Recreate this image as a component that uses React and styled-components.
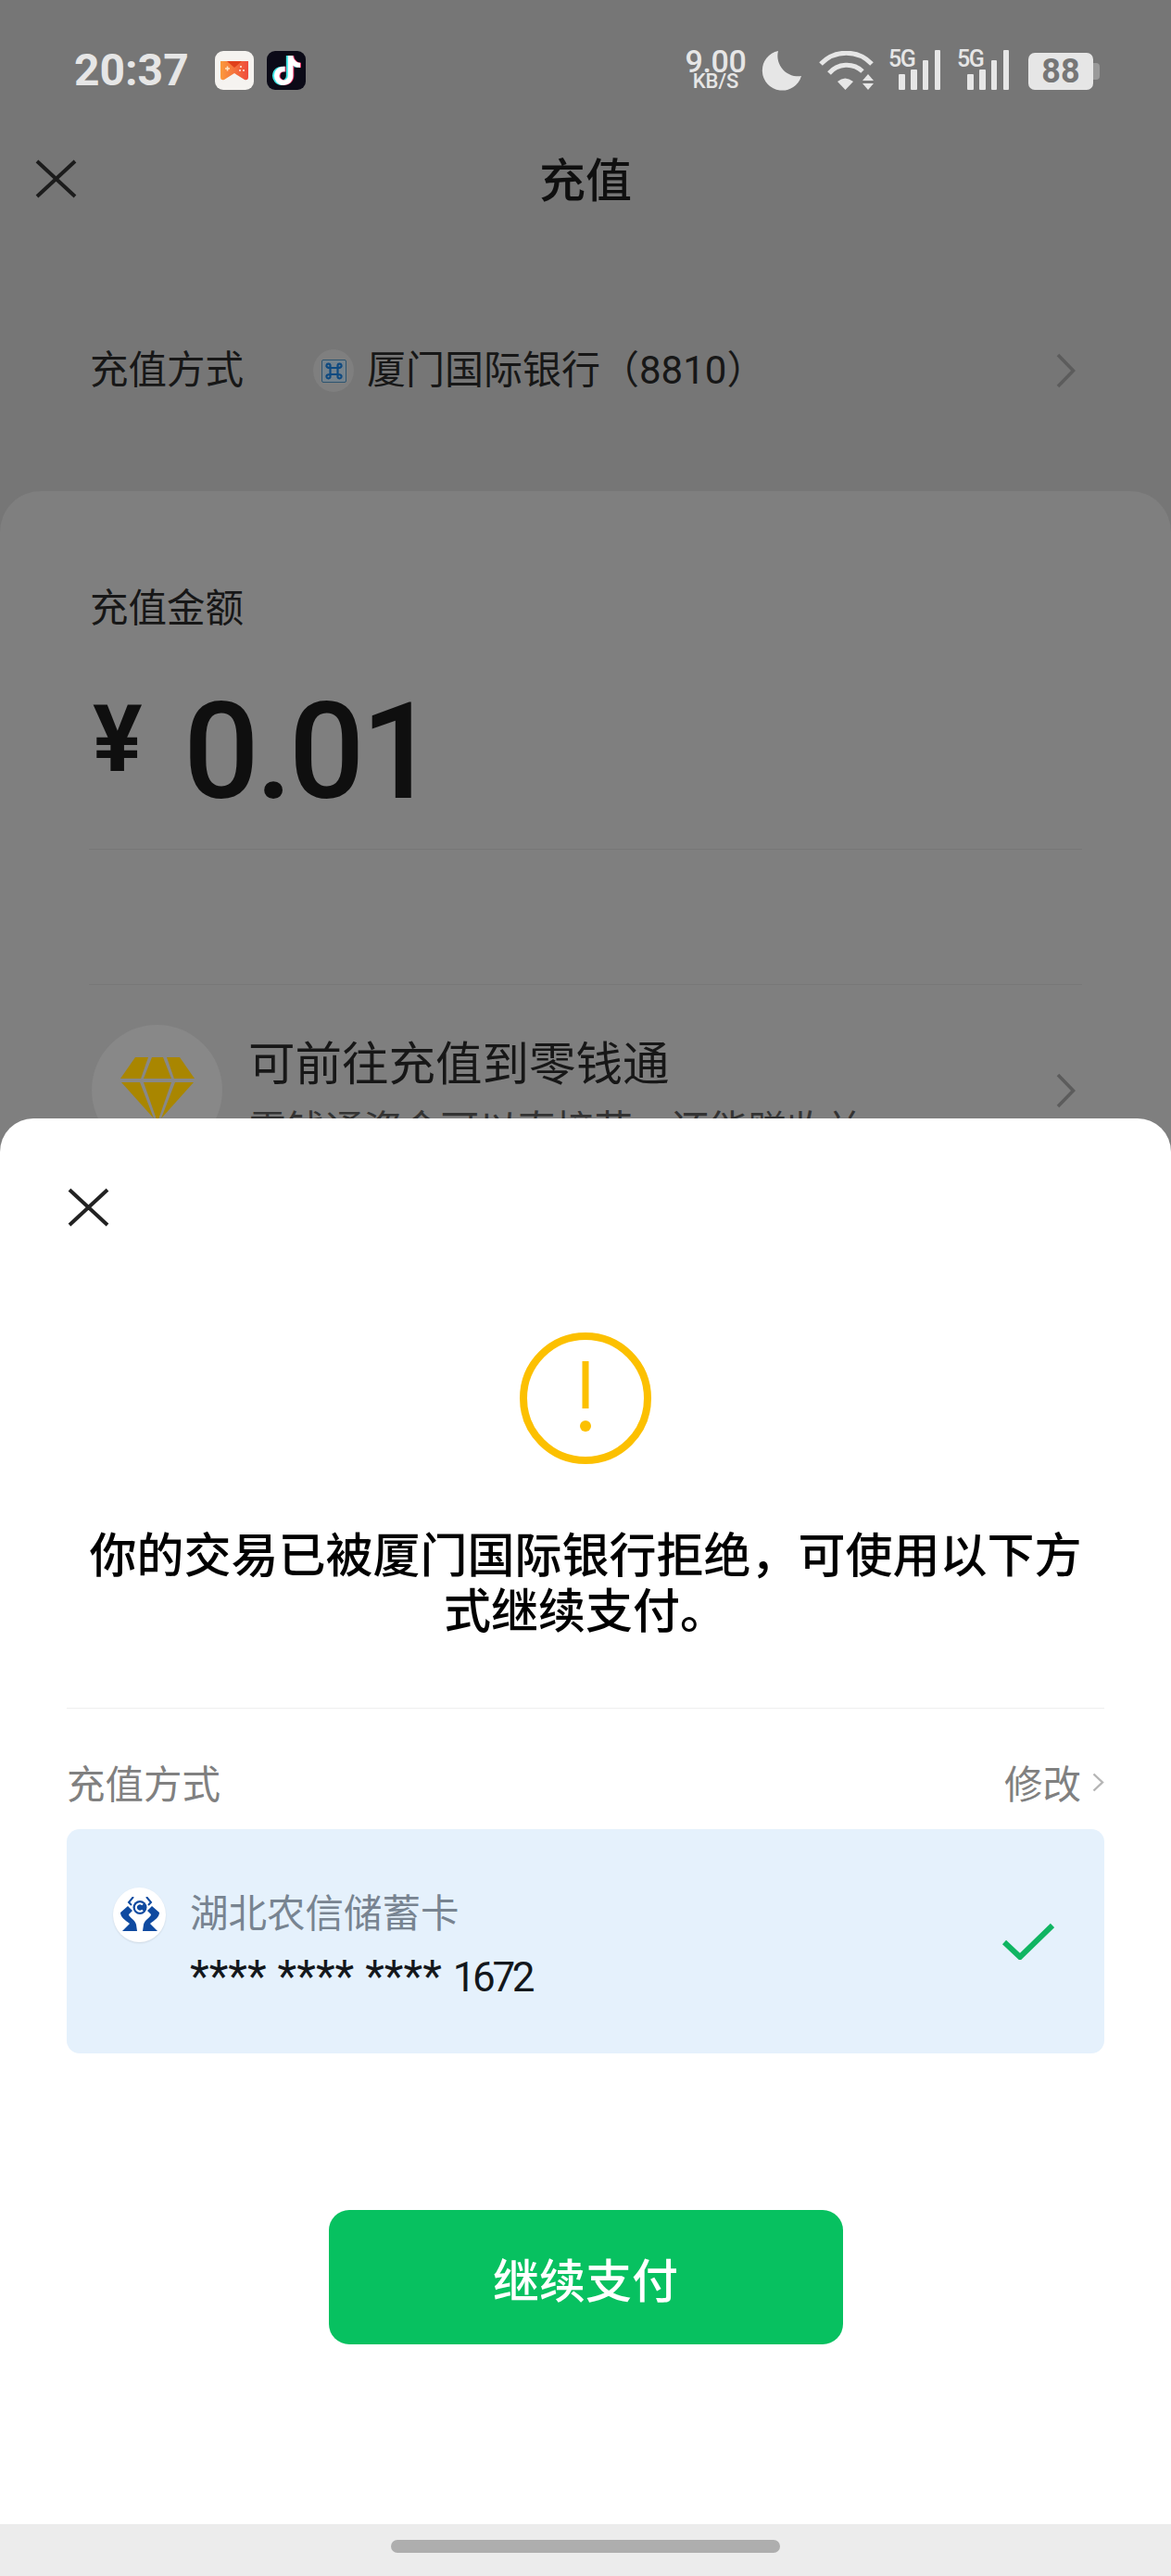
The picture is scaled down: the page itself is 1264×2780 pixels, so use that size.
import React from 'react'
import styled, { createGlobalStyle } from 'styled-components'
import { FaTiktok } from 'react-icons/fa'

const GlobalStyle = createGlobalStyle`
  html, body {
    margin: 0;
    padding: 0;
    background: #767676;
  }
  * {
    box-sizing: border-box;
  }
`

const Page = styled.div`
  position: relative;
  width: 1264px;
  height: 2780px;
  overflow: hidden;
  background: #767676;
  color: #171717;
  font-family: Roboto, "Noto Sans CJK SC", sans-serif;
`

const StatusBar = styled.div`
  height: 98px;
  padding: 54px 77px 0 80px;
  display: flex;
  justify-content: space-between;
  color: #e6e6e6;
`

const StatusLeft = styled.div`
  display: flex;
  align-items: center;
  height: 44px;
`

const Clock = styled.span`
  width: 152px;
  font-size: 48px;
  font-weight: 700;
  line-height: 44px;
`

const AppTile = styled.div`
  position: relative;
  width: 42px;
  height: 42px;
  margin-right: 14px;
  border-radius: 9px;
  background: ${(props) => props.bg};
  overflow: hidden;
`

const NoteLayer = styled(FaTiktok)`
  position: absolute;
  top: 5px;
  left: ${(props) => props.left}px;
  width: 32px;
  height: 32px;
  color: ${(props) => props.tint};
`

const StatusRight = styled.div`
  display: flex;
  align-items: flex-start;
  height: 44px;
`

const Speed = styled.div`
  width: 69px;
  margin-right: 14px;
  display: flex;
  flex-direction: column;
  align-items: center;
`

const SpeedValue = styled.span`
  font-size: 34px;
  font-weight: 500;
  line-height: 25px;
  letter-spacing: -0.4px;
`

const SpeedUnit = styled.span`
  font-size: 22px;
  font-weight: 500;
  line-height: 18px;
`

const Moon = styled.svg`
  width: 44px;
  height: 43px;
  margin: 1px 19px 0 0;
`

const Wifi = styled.svg`
  width: 59px;
  height: 42px;
  margin: 1px 16px 0 0;
`

const Signal = styled.div`
  position: relative;
  width: 56px;
  height: 43px;
  margin-right: ${(props) => props.gap}px;
`

const SignalLabel = styled.span`
  position: absolute;
  top: -3px;
  left: 0;
  font-size: 25px;
  font-weight: 500;
  line-height: 25px;
  letter-spacing: -1.4px;
`

const SignalBars = styled.svg`
  display: block;
  width: 56px;
  height: 43px;
`

const Battery = styled.div`
  display: flex;
  align-items: center;
  margin-top: 3px;
`

const BatteryBody = styled.div`
  width: 70px;
  height: 40px;
  border-radius: 7px;
  background: #e6e6e6;
  color: #767676;
  font-size: 36px;
  font-weight: 700;
  line-height: 40px;
  text-align: center;
`

const BatteryNub = styled.div`
  width: 7px;
  height: 18px;
  border-radius: 0 4px 4px 0;
  background: #9a9a9a;
`

const Header = styled.div`
  position: relative;
  height: 192px;
  padding-top: 4px;
  display: flex;
  align-items: center;
  justify-content: center;
`

const CloseIcon = styled.svg`
  display: block;
  width: 45px;
  height: 42px;
`

const HeaderClose = styled.div`
  position: absolute;
  left: 38px;
  top: 74px;
`

const Title = styled.div`
  font-size: 50px;
  font-weight: 500;
  line-height: 64px;
  color: #0f0f0f;
`

const MethodRow = styled.div`
  height: 220px;
  margin-bottom: 20px;
  padding: 0 103px 0 97px;
  display: flex;
  align-items: center;
`

const RowLabel = styled.span`
  width: 241px;
  font-size: 41.5px;
  line-height: 56px;
`

const BankBadge = styled.div`
  width: 44px;
  height: 46px;
  margin-right: 14px;
  border-radius: 50%;
  background: #7f7f7f;
  display: flex;
  align-items: center;
  justify-content: center;
`

const BankMark = styled.svg`
  width: 27px;
  height: 25px;
`

const BankName = styled.span`
  flex: 1;
  font-size: 42px;
  line-height: 56px;
`

const Chevron = styled.svg`
  flex: none;
  width: 21px;
  height: 38px;
`

const Card = styled.div`
  height: 1300px;
  padding: 99px 96px 0;
  border-radius: 44px 44px 0 0;
  background: #7f7f7f;
`

const CardLabel = styled.div`
  padding-left: 1px;
  font-size: 41.5px;
  line-height: 56px;
`

const AmountRow = styled.div`
  height: 148px;
  margin-top: 53px;
  display: flex;
  align-items: center;
  color: #0f0f0f;
`

const Currency = styled.span`
  width: 102px;
  padding: 0 0 28px 4px;
  font-size: 100px;
  font-weight: 700;
  line-height: 100px;
`

const Amount = styled.span`
  font-size: 144px;
  font-weight: 500;
  line-height: 148px;
  letter-spacing: -4px;
`

const CardLine = styled.div`
  height: 1px;
  margin-top: ${(props) => props.top}px;
  background: #777777;
`

const PromoRow = styled.div`
  margin-top: 43px;
  padding-right: 7px;
  display: flex;
  align-items: center;
`

const PromoBadge = styled.div`
  width: 141px;
  height: 141px;
  margin: 0 28px 0 3px;
  padding-top: 35px;
  border-radius: 50%;
  background: #888888;
  display: flex;
  justify-content: center;
  align-items: flex-start;
`

const Diamond = styled.svg`
  width: 80px;
  height: 70px;
`

const PromoText = styled.div`
  flex: 1;
  padding-top: 8px;
`

const PromoTitle = styled.div`
  font-size: 50.5px;
  line-height: 64px;
`

const PromoSub = styled.div`
  margin-top: 14px;
  font-size: 41.5px;
  line-height: 50px;
  color: #333333;
`

const Sheet = styled.div`
  position: absolute;
  top: 1207px;
  left: 0;
  width: 1264px;
  height: 1573px;
  border-radius: 36px 36px 0 0;
  background: #ffffff;
  display: flex;
  flex-direction: column;
`

const SheetClose = styled.div`
  padding: 75px 0 0 73px;
`

const WarnIcon = styled.svg`
  display: block;
  width: 142px;
  height: 142px;
  margin: 114px auto 0;
`

const Message = styled.div`
  width: 1090px;
  margin: 70px auto 0;
  font-size: 51px;
  font-weight: 500;
  line-height: 60px;
  text-align: center;
  color: #000000;
`

const SheetBody = styled.div`
  padding: 0 72px;
  flex: 1;
  display: flex;
  flex-direction: column;
`

const Divider = styled.div`
  height: 1px;
  margin-top: 73px;
  background: #efefef;
`

const MethodHead = styled.div`
  height: 130px;
  padding-top: 28px;
  display: flex;
  align-items: center;
  justify-content: space-between;
  font-size: 41.5px;
  color: #808080;
`

const EditLink = styled.div`
  display: flex;
  align-items: center;
  gap: 12px;
`

const SmallChevron = styled.svg`
  width: 13px;
  height: 21px;
`

const PayCard = styled.div`
  height: 242px;
  padding: 0 54px 0 50px;
  border-radius: 14px;
  background: #e5f1fc;
  display: flex;
  align-items: center;
`

const BankLogo = styled.div`
  width: 57px;
  height: 59px;
  margin: -58px 26px 0 0;
  border-radius: 50%;
  background: #ffffff;
  box-shadow: 0 1px 2px rgba(0, 0, 0, 0.1);
  display: flex;
  align-items: center;
  justify-content: center;
`

const HandsMark = styled.svg`
  width: 42px;
  height: 38px;
`

const PayText = styled.div`
  flex: 1;
  padding-top: 10px;
`

const PayName = styled.div`
  font-size: 41.5px;
  line-height: 56px;
  color: #788491;
`

const PayNumber = styled.div`
  margin-top: 11px;
  font-size: 44px;
  line-height: 56px;
  letter-spacing: -3.4px;
  color: #14181c;
`

const Stars = styled.span`
  font-size: 48px;
  letter-spacing: 0;
`

const Check = styled.svg`
  width: 56px;
  height: 40px;
`

const PayButton = styled.div`
  align-self: center;
  width: 555px;
  height: 145px;
  margin-top: 169px;
  border-radius: 22px;
  background: #07c160;
  color: #ffffff;
  font-size: 50px;
  font-weight: 500;
  display: flex;
  align-items: center;
  justify-content: center;
`

const NavBar = styled.div`
  height: 56px;
  padding-top: 17px;
  background: #ececec;
  display: flex;
  justify-content: center;
  align-items: flex-start;
`

const NavPill = styled.div`
  width: 420px;
  height: 14px;
  border-radius: 7px;
  background: #aeaeae;
`

const SignalIcon = ({ gap }) => (
  <Signal gap={gap}>
    <SignalBars viewBox="0 0 56 43">
      <g fill="#e6e6e6">
        <rect x="11" y="26" width="7" height="17" rx="1" />
        <rect x="24" y="21" width="7" height="22" rx="1" />
        <rect x="37" y="11" width="6" height="32" rx="1" />
        <rect x="50" y="0" width="6" height="43" rx="1" />
      </g>
    </SignalBars>
    <SignalLabel>5G</SignalLabel>
  </Signal>
)

const Cross = ({ color }) => (
  <CloseIcon viewBox="0 0 45 42">
    <path d="M2 2 L43 40 M43 2 L2 40" stroke={color} strokeWidth="4" fill="none" />
  </CloseIcon>
)

const RowChevron = () => (
  <Chevron viewBox="0 0 21 38">
    <path d="M2 2 L18.5 19 L2 36" stroke="#5c5c5c" strokeWidth="3.6" fill="none" />
  </Chevron>
)

const App = () => {
  return (
    <Page>
      <GlobalStyle />
      <StatusBar>
        <StatusLeft>
          <Clock>20:37</Clock>
          <AppTile bg="#f5f3f0">
            <svg width="42" height="42" viewBox="0 0 42 42">
              <defs>
                <linearGradient id="pad" x1="0" x2="1" y1="0" y2="0">
                  <stop offset="0" stopColor="#fb9a3c" />
                  <stop offset="1" stopColor="#ee4b3e" />
                </linearGradient>
              </defs>
              <path d="M6 11 H36 V28 Q36 32 32 31 L21 24 L10 31 Q6 32 6 28 Z" fill="url(#pad)" />
              <path d="M13 11 H29 L21 18 Z" fill="#e0401c" />
              <path d="M11 19 h5 M13.500 16.500 v5" stroke="#fde3c4" strokeWidth="1.6" />
              <circle cx="28" cy="17" r="1.100" fill="#fde3e0" />
              <circle cx="31" cy="21" r="1.100" fill="#fde3e0" />
              <circle cx="27" cy="21" r="1.100" fill="#fde3e0" />
            </svg>
          </AppTile>
          <AppTile bg="#0b0a17">
            <NoteLayer left={4} tint="#3fe6e6" />
            <NoteLayer left={7} tint="#f5396a" />
            <NoteLayer left={5.5} tint="#ffffff" />
          </AppTile>
        </StatusLeft>
        <StatusRight>
          <Speed>
            <SpeedValue>9.00</SpeedValue>
            <SpeedUnit>KB/S</SpeedUnit>
          </Speed>
          <Moon viewBox="0 0 44 43">
            <path d="M19 0 A21.500 21.500 0 1 0 44 27 A22 22 0 0 1 19 0 Z" fill="#e6e6e6" />
          </Moon>
          <Wifi viewBox="0 0 59 42">
            <g fill="none" stroke="#e6e6e6" strokeWidth="5">
              <path d="M2 14 A38 38 0 0 1 57 14" />
              <path d="M11 24 A25 25 0 0 1 47 22" />
            </g>
            <path d="M20 33 Q28 26 37 33 L28.500 42 Z" fill="#e6e6e6" />
            <path d="M47 32 L53 25 L59 32 Z M47 35 L59 35 L53 42 Z" fill="#e6e6e6" />
          </Wifi>
          <SignalIcon gap={18} />
          <SignalIcon gap={21} />
          <Battery>
            <BatteryBody>88</BatteryBody>
            <BatteryNub />
          </Battery>
        </StatusRight>
      </StatusBar>

      <Header>
        <HeaderClose>
          <Cross color="#1c1c1c" />
        </HeaderClose>
        <Title>充值</Title>
      </Header>

      <MethodRow>
        <RowLabel>充值方式</RowLabel>
        <BankBadge>
          <BankMark viewBox="0 0 27 25">
            <rect x="0.500" y="0.500" width="26" height="24" rx="1.500" fill="#75838d" stroke="#2c5470" />
            <path
              d="M9.500 9 H17.500 V16 H9.500 Z M9.500 9 C6 9 5 7.500 5.500 6 C6 4.500 9 4 9.500 6 Z M17.500 9 C21 9 22 7.500 21.500 6 C21 4.500 18 4 17.500 6 Z M9.500 16 C6 16 5 17.500 5.500 19 C6 20.500 9 21 9.500 19 Z M17.500 16 C21 16 22 17.500 21.500 19 C21 20.500 18 21 17.500 19 Z"
              fill="none"
              stroke="#0f4a80"
              strokeWidth="2.200"
            />
          </BankMark>
        </BankBadge>
        <BankName>厦门国际银行（8810）</BankName>
        <RowChevron />
      </MethodRow>

      <Card>
        <CardLabel>充值金额</CardLabel>
        <AmountRow>
          <Currency>¥</Currency>
          <Amount>0.01</Amount>
        </AmountRow>
        <CardLine top={30} />
        <CardLine top={145} />
        <PromoRow>
          <PromoBadge>
            <Diamond viewBox="0 0 80 70">
              <g fill="#a98600">
                <path d="M16 0 H30 L22 23 H0 Z" />
                <path d="M34 0 H46 L55 23 H25 Z" />
                <path d="M50 0 H64 L80 23 H58 Z" />
                <path d="M1 27 H21 L36 66 Z" />
                <path d="M25 27 H55 L40 70 Z" />
                <path d="M59 27 H79 L44 66 Z" />
              </g>
            </Diamond>
          </PromoBadge>
          <PromoText>
            <PromoTitle>可前往充值到零钱通</PromoTitle>
            <PromoSub>零钱通资金可以直接花，还能赚收益</PromoSub>
          </PromoText>
          <RowChevron />
        </PromoRow>
      </Card>

      <Sheet>
        <SheetClose>
          <Cross color="#222222" />
        </SheetClose>
        <WarnIcon viewBox="0 0 142 142">
          <circle cx="71" cy="71" r="67" fill="none" stroke="#fcc000" strokeWidth="8" />
          <rect x="67.500" y="31" width="7" height="51" fill="#fcc000" />
          <circle cx="71" cy="101" r="6" fill="#fcc000" />
        </WarnIcon>
        <Message>你的交易已被厦门国际银行拒绝，可使用以下方式继续支付。</Message>
        <SheetBody>
          <Divider />
          <MethodHead>
            <span>充值方式</span>
            <EditLink>
              修改
              <SmallChevron viewBox="0 0 13 21">
                <path d="M1.500 1.500 L11 10.500 L1.500 19.500" stroke="#b5b5b5" strokeWidth="2.400" fill="none" />
              </SmallChevron>
            </EditLink>
          </MethodHead>
          <PayCard>
            <BankLogo>
              <HandsMark viewBox="0 0 42 38">
                <g fill="#0f4aa0">
                  <path d="M8 10 L0 17 C0 22 5 25 10 29 L2 37 H18 L17 30 C16 25 9 22 9 19 L13 15 Z" />
                  <path d="M34 10 L42 17 C42 22 37 25 32 29 L40 37 H24 L25 30 C26 25 33 22 33 19 L29 15 Z" />
                  <circle cx="21" cy="11.500" r="7.500" />
                </g>
                <path d="M14 0 L9 6 L12 9 M28 0 L33 6 L30 9" fill="none" stroke="#0f4aa0" strokeWidth="2" />
                <path d="M24 8.500 A4.200 4.200 0 1 0 24 14.500" fill="none" stroke="#ffffff" strokeWidth="2.200" />
              </HandsMark>
            </BankLogo>
            <PayText>
              <PayName>湖北农信储蓄卡</PayName>
              <PayNumber>
                <Stars>**** **** **** </Stars>1672
              </PayNumber>
            </PayText>
            <Check viewBox="0 0 56 40">
              <path d="M2 21 L19 37 L54 3" stroke="#0fb562" strokeWidth="6" fill="none" />
            </Check>
          </PayCard>
          <PayButton>继续支付</PayButton>
        </SheetBody>
        <NavBar>
          <NavPill />
        </NavBar>
      </Sheet>
    </Page>
  )
}

export default App
